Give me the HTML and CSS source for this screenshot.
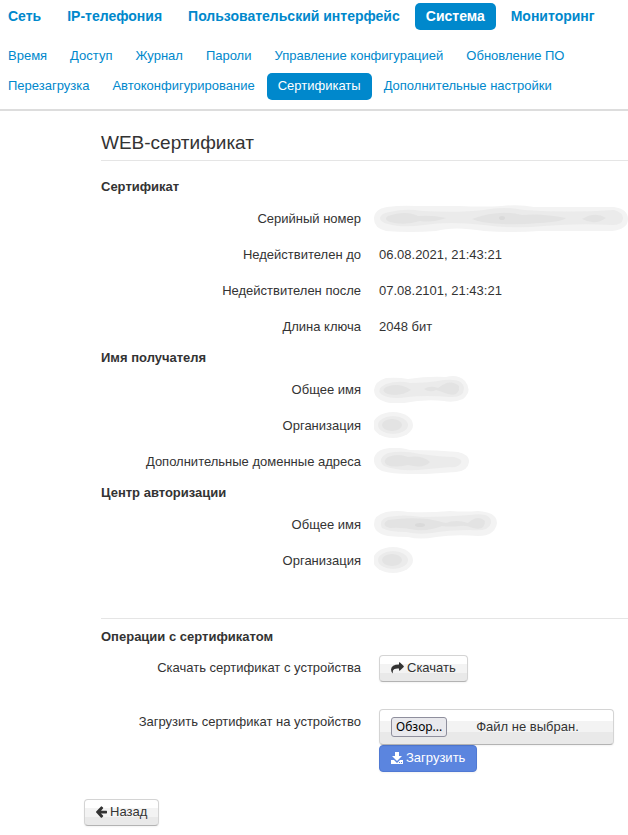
FILE: index.html
```html
<!DOCTYPE html>
<html lang="ru">
<head>
    <meta charset="UTF-8">
    <meta name="viewport" content="width=device-width, initial-scale=1.0">
    <title>WEB-сертификат</title>
    <link rel="stylesheet" href="styles.css">
</head>
<body>

    <header class="header">
        <nav class="nav nav-main">
            <a href="#">Сеть</a>
            <a href="#">IP-телефония</a>
            <a href="#">Пользовательский интерфейс</a>
            <a href="#" class="active">Система</a>
            <a href="#">Мониторинг</a>
        </nav>
        <nav class="nav nav-sub">
            <a href="#">Время</a>
            <a href="#">Доступ</a>
            <a href="#">Журнал</a>
            <a href="#">Пароли</a>
            <a href="#">Управление конфигурацией</a>
            <a href="#">Обновление ПО</a>
            <a href="#">Перезагрузка</a>
            <a href="#">Автоконфигурирование</a>
            <a href="#" class="active">Сертификаты</a>
            <a href="#">Дополнительные настройки</a>
        </nav>
    </header>

    <main class="content">
        <h1>WEB-сертификат</h1>

        <section class="info">
            <h2>Сертификат</h2>
            <dl>
                <div class="row">
                    <dt>Серийный номер</dt>
                    <dd class="masked">
                        <svg width="256" height="28" viewBox="0 0 256 28" aria-hidden="true">
                            <path fill="#f3f3f3" d="M13 2Q28 0 42 1H85Q110 2 128 1Q145 -1 160 2H240Q254 4 254 14Q254 24 238 26H165Q140 28 110 26Q80 21 62 26Q36 28 12 26Q0 23 0 14Q0 4 13 2Z"/>
                            <path fill="#ebebeb" d="M16 7Q32 3 48 6Q85 8 110 5Q130 1 150 5Q195 8 240 5Q250 8 249 14Q248 20 238 20Q205 18 170 21Q140 24 110 20Q75 16 50 20Q28 23 14 19Q6 17 6 13Q7 8 16 7Z"/>
                            <path fill="#e3e3e3" d="M14 11Q32 5 44 11Q58 10 72 13Q58 18 46 16Q30 21 16 17Q9 14 14 11ZM98 14Q125 4 148 10Q168 8 192 13Q188 17 165 18Q145 20 128 19Q106 18 98 14ZM208 14Q221 6 232 13Q221 21 208 14Z"/>
                            <ellipse cx="128" cy="13" rx="3" ry="2" fill="#dadada"/>
                        </svg>
                    </dd>
                </div>
                <div class="row">
                    <dt>Недействителен до</dt>
                    <dd>06.08.2021, 21:43:21</dd>
                </div>
                <div class="row">
                    <dt>Недействителен после</dt>
                    <dd>07.08.2101, 21:43:21</dd>
                </div>
                <div class="row">
                    <dt>Длина ключа</dt>
                    <dd>2048 бит</dd>
                </div>
            </dl>
        </section>

        <section class="info">
            <h2>Имя получателя</h2>
            <dl>
                <div class="row">
                    <dt>Общее имя</dt>
                    <dd class="masked">
                        <svg width="96" height="28" viewBox="0 0 96 28" aria-hidden="true">
                            <path fill="#f3f3f3" d="M12 2Q24 1 34 3Q54 0 72 1Q84 -2 91 5Q99 15 89 23Q80 27 70 25Q50 23 30 27H16Q0 24 0 14Q1 5 12 2Z"/>
                            <path fill="#ebebeb" d="M12 8Q24 4 36 7Q54 7 70 4Q90 2 90 13Q89 22 76 21Q52 19 34 21Q15 24 7 18Q2 13 12 8Z"/>
                            <path fill="#e3e3e3" d="M12 11Q25 6 37 14Q26 21 14 18Q6 15 12 11ZM50 13Q56 9 64 12Q76 2 85 10Q86 21 74 18Q66 15 62 14Q56 17 50 13Z"/>
                        </svg>
                    </dd>
                </div>
                <div class="row">
                    <dt>Организация</dt>
                    <dd class="masked">
                        <svg width="40" height="28" viewBox="0 0 40 28" aria-hidden="true">
                            <ellipse cx="19" cy="13" rx="20" ry="13" fill="#f3f3f3"/>
                            <ellipse cx="19" cy="13" rx="15" ry="9" fill="#ebebeb"/>
                            <ellipse cx="18" cy="13" rx="10" ry="6" fill="#e3e3e3"/>
                        </svg>
                    </dd>
                </div>
                <div class="row">
                    <dt>Дополнительные доменные адреса</dt>
                    <dd class="masked">
                        <svg width="96" height="28" viewBox="0 0 96 28" aria-hidden="true">
                            <path fill="#f3f3f3" d="M10 1Q22 -2 36 2Q64 2 84 4Q96 7 95 14Q94 23 82 24L52 26H36Q18 26 8 23Q-1 19 0 10Q2 3 10 1Z"/>
                            <path fill="#ebebeb" d="M14 5Q28 2 46 6Q68 9 80 9Q89 11 87 15Q84 20 76 19Q54 21 44 22Q22 23 10 18Q2 11 14 5Z"/>
                            <path fill="#e3e3e3" d="M14 9Q24 5 34 9Q48 7 56 14Q50 21 34 17Q20 20 13 17Q8 13 14 9Z"/>
                        </svg>
                    </dd>
                </div>
            </dl>
        </section>

        <section class="info">
            <h2>Центр авторизации</h2>
            <dl>
                <div class="row">
                    <dt>Общее имя</dt>
                    <dd class="masked">
                        <svg width="124" height="28" viewBox="0 0 124 28" aria-hidden="true">
                            <path fill="#f3f3f3" d="M12 1Q24 -1 34 1Q55 2 76 0Q92 1 104 0Q123 1 123 12Q121 25 104 25Q82 23 62 26Q46 29 34 26Q24 26 14 25Q0 22 0 13Q0 4 12 1Z"/>
                            <path fill="#ebebeb" d="M14 6Q30 3 48 6Q72 6 96 4Q118 1 117 12Q115 21 96 19Q74 19 58 22Q44 24 32 21Q15 21 8 17Q4 9 14 6Z"/>
                            <path fill="#e3e3e3" d="M14 9Q34 6 54 8Q64 10 72 12Q82 8 94 12Q104 3 111 10Q111 20 99 17Q92 14 86 15Q76 16 68 15Q56 20 42 19Q26 16 16 17Q6 14 14 9Z"/>
                            <ellipse cx="46" cy="14" rx="5" ry="2" fill="#dadada"/>
                        </svg>
                    </dd>
                </div>
                <div class="row">
                    <dt>Организация</dt>
                    <dd class="masked">
                        <svg width="40" height="28" viewBox="0 0 40 28" aria-hidden="true">
                            <ellipse cx="19" cy="13" rx="20" ry="13" fill="#f3f3f3"/>
                            <ellipse cx="19" cy="13" rx="15" ry="9" fill="#ebebeb"/>
                            <ellipse cx="18" cy="13" rx="10" ry="6" fill="#e3e3e3"/>
                        </svg>
                    </dd>
                </div>
            </dl>
        </section>

        <section class="operations">
            <h2>Операции с сертификатом</h2>
            <div class="operation">
                <label for="download">Скачать сертификат с устройства</label>
                <div class="controls">
                    <button type="button" id="download" class="btn">
                        <svg width="13" height="12" viewBox="0 0 13 12" aria-hidden="true">
                            <path d="M8 0.500Q8.500 0 9 0.500L12.700 4Q13 4.500 12.700 5L9 8.500Q8 9 8 8V6.500Q3 6 2 8.500Q1.500 10 2 11.500Q0 10 0 7.500Q0.500 2.500 8 2.500Z"/>
                        </svg>
                        Скачать
                    </button>
                </div>
            </div>
            <form class="operation">
                <label for="cert-file">Загрузить сертификат на устройство</label>
                <div class="controls">
                    <div class="file-box">
                        <span class="browse">Обзор...</span>
                        <span>Файл не выбран.</span>
                        <input type="file" id="cert-file">
                    </div>
                    <button type="submit" class="btn btn-primary">
                        <svg width="12" height="12" viewBox="0 0 12 12" aria-hidden="true">
                            <path fill-rule="evenodd" d="M4 0H8V4H11L6 9L1 4H4ZM0 8H3L6 11L9 8H12V12H0ZM8 10V11H9V10ZM10 10V11H11V10Z"/>
                        </svg>
                        Загрузить
                    </button>
                </div>
            </form>
        </section>
    </main>

    <footer class="footer">
        <button type="button" class="btn">
            <svg width="11" height="12" viewBox="0 0 11 12" aria-hidden="true">
                <path d="M5.500 0.300L7 1.500Q7.400 2 7 2.500L5 4.700H10.500L11 5.200V7L10.500 7.500H5L7 9.600Q7.400 10 7 10.500L5.800 11.700Q5.300 12 5 11.700L0.200 6.600Q-0.200 6 0.200 5.500L5 0.400Z"/>
            </svg>
            Назад
        </button>
    </footer>

</body>
</html>
```
FILE: styles.css
```css
* {
    box-sizing: border-box;
}

body {
    margin: 0;
    background: #fff;
    color: #333;
    font-family: "Liberation Sans", Arial, sans-serif;
    font-size: 13px;
    line-height: 18px;
}

a {
    color: #0088cc;
    text-decoration: none;
}

h1, h2, dl, dd {
    margin: 0;
}

/* navigation */
.header {
    padding: 3px 0 9px;
    border-bottom: 2px solid #ddd;
}

.nav {
    display: flex;
    flex-wrap: wrap;
    gap: 3px 1px;
    margin-left: -3px;
}

.nav a {
    padding: 4px 11px 5px;
    border-radius: 5px;
}

.nav a:hover {
    background: #eee;
}

.nav a.active {
    background: #0088cc;
    color: #fff;
}

.nav-main {
    column-gap: 4px;
    margin-bottom: 13px;
    font-size: 14px;
    font-weight: bold;
}

/* certificate info */
.content {
    padding: 20px 0 0 101px;
}

h1 {
    padding-bottom: 5px;
    margin-bottom: 13px;
    border-bottom: 1px solid #e5e5e5;
    font-size: 19px;
    font-weight: normal;
    line-height: 24px;
}

h2 {
    padding: 4px 0 5px;
    font-size: 13px;
    line-height: 18px;
}

.row {
    display: flex;
    align-items: center;
    gap: 18px;
    height: 36px;
}

.row dt {
    flex: 0 0 260px;
    text-align: right;
}

.row dd {
    flex: 1;
}

.row .masked {
    margin-left: -5px;
}

.masked svg {
    display: block;
}

/* operations */
.operations {
    margin-top: 39px;
    padding-top: 5px;
    border-top: 1px solid #e5e5e5;
}

.operation {
    display: flex;
    gap: 18px;
    margin: 4px 0 27px;
}

.operation label {
    flex: 0 0 260px;
    padding-top: 4px;
    text-align: right;
}

.controls {
    display: flex;
    flex-direction: column;
    align-items: flex-start;
}

.btn, .file-box {
    border: 1px solid #d4d4d4;
    border-bottom-color: #b3b3b3;
    border-radius: 4px;
    background: linear-gradient(#fff 33%, #f3f3f3 33%, #f3f3f3 66%, #e9e9e9 66%);
    box-shadow: 0 1px 2px rgba(0, 0, 0, 0.05);
}

.btn {
    display: inline-flex;
    align-items: center;
    gap: 3px;
    height: 27px;
    padding: 0 11px 2px;
    color: #333;
    font: inherit;
    cursor: pointer;
}

.btn svg {
    fill: currentColor;
}

.btn-primary {
    border-color: #5079d3;
    background: #5b85df;
    color: #fff;
}

.file-box {
    position: relative;
    display: flex;
    align-items: center;
    gap: 29px;
    min-width: 235px;
    height: 36px;
    padding: 0 11px;
}

.browse {
    padding: 0 4px;
    border: 1px solid #8f8f9d;
    border-radius: 3px;
    background: #e9e9ed;
    color: #000;
    font-family: "Noto Sans", sans-serif;
    font-size: 12px;
}

/* native picker lies over the styled box */
.file-box input {
    position: absolute;
    inset: 0;
    width: 100%;
    opacity: 0;
    cursor: pointer;
}

.footer {
    padding: 0 84px 9px;
}
```
